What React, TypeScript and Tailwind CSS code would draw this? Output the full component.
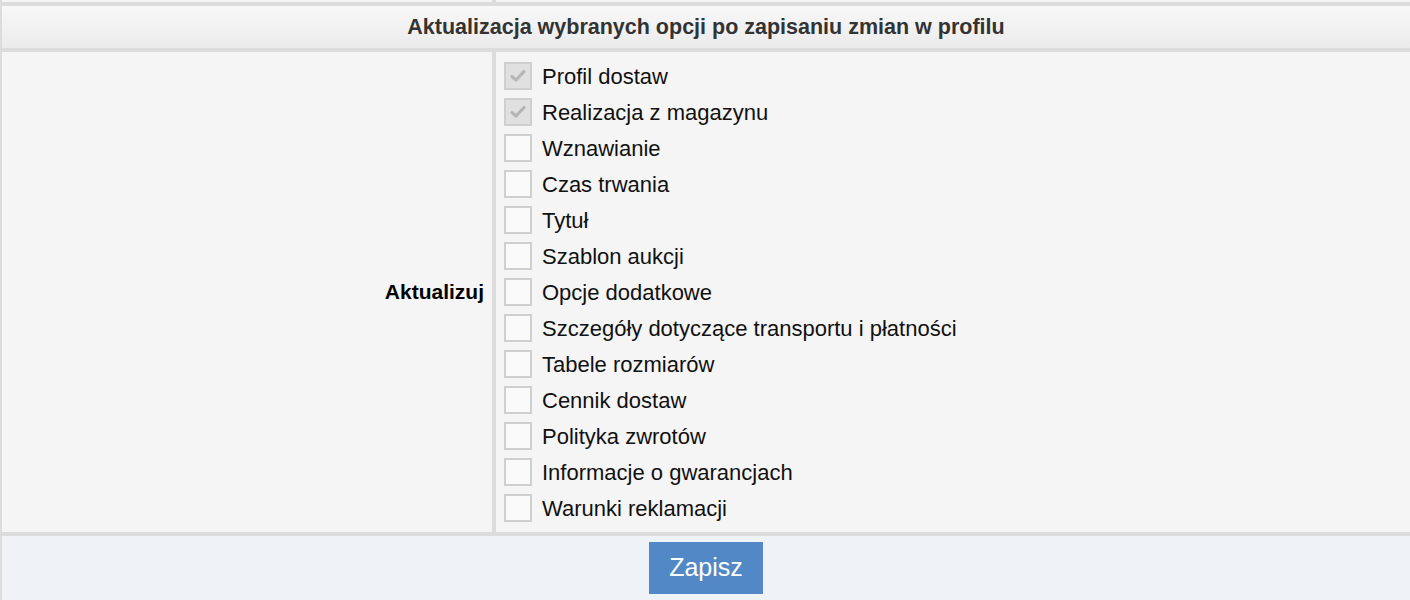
import React from "react";

const items: { label: string; checked: boolean }[] = [
  { label: "Profil dostaw", checked: true },
  { label: "Realizacja z magazynu", checked: true },
  { label: "Wznawianie", checked: false },
  { label: "Czas trwania", checked: false },
  { label: "Tytuł", checked: false },
  { label: "Szablon aukcji", checked: false },
  { label: "Opcje dodatkowe", checked: false },
  { label: "Szczegóły dotyczące transportu i płatności", checked: false },
  { label: "Tabele rozmiarów", checked: false },
  { label: "Cennik dostaw", checked: false },
  { label: "Polityka zwrotów", checked: false },
  { label: "Informacje o gwarancjach", checked: false },
  { label: "Warunki reklamacji", checked: false },
];

function Box({ checked }: { checked: boolean }) {
  return (
    <span
      className={
        checked
          ? "flex h-[28px] w-[28px] shrink-0 items-center justify-center border-2 border-[#cfcfcf] bg-[#e0e0e0]"
          : "flex h-[28px] w-[28px] shrink-0 items-center justify-center border-2 border-[#cfcfcf] bg-[#fafafa]"
      }
    >
      {checked && (
        <svg width="18" height="18" viewBox="0 0 18 18">
          <path d="M3 9.5 L7 13 L15 4.5" fill="none" stroke="#b6b6b6" strokeWidth="3.2" strokeLinecap="round" strokeLinejoin="round" />
        </svg>
      )}
    </span>
  );
}

export default function App() {
  return (
    <div
      className="min-h-screen w-full bg-[#dcdcdc] pl-[2px] flex flex-col gap-[4px] overflow-hidden"
      style={{ fontFamily: '"Liberation Sans", Arial, Helvetica, sans-serif' }}
    >
      <div className="flex h-[2px] gap-[4px]">
        <div className="w-[490px] bg-[#f5f5f5]" />
        <div className="flex-1 bg-[#f5f5f5]" />
      </div>
      <div className="flex h-[42px] items-center justify-center bg-gradient-to-b from-[#f8f8f8] to-[#ebebeb] text-[21.5px] font-bold text-[#333333]">
        Aktualizacja wybranych opcji po zapisaniu zmian w profilu
      </div>
      <div className="flex gap-[4px]">
        <div className="flex w-[490px] items-center justify-end bg-[#f5f5f5] pr-[8px] text-[21px] font-bold text-black">
          Aktualizuj
        </div>
        <div className="flex flex-1 flex-col bg-[#f5f5f5] py-[6px] pl-[8px]">
          {items.map((it) => (
            <label key={it.label} className="flex h-[36px] items-center gap-[10px] text-[22px] text-[#111111]">
              <Box checked={it.checked} />
              <span>{it.label}</span>
            </label>
          ))}
        </div>
      </div>
      <div className="flex flex-1 justify-center bg-[#eff3f8] pt-[6px] pb-[20px]">
        <button className="h-[52px] w-[114px] bg-[#5288c6] text-[25px] text-white">Zapisz</button>
      </div>
    </div>
  );
}
